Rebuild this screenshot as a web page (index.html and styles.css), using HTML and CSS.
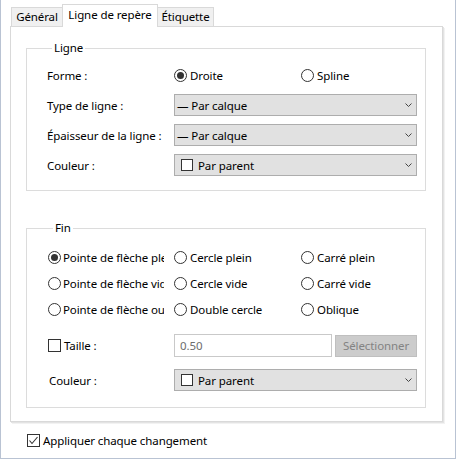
FILE: index.html
```html
<!DOCTYPE html>
<html lang="fr">
<head>
<meta charset="utf-8">
<title>Ligne de repère</title>
<link rel="stylesheet" href="styles.css">
</head>
<body>
<div class="window">
  <div class="tabs">
    <div class="tab tab-general">Général</div>
    <div class="tab tab-active">Ligne de repère</div>
    <div class="tab tab-label">Étiquette</div>
  </div>
  <div class="panel">
    <fieldset class="group group-ligne">
      <legend>Ligne</legend>
      <div class="form-grid">
        <span class="lbl">Forme :</span>
        <div class="radio-pair">
          <label class="radio radio-wide checked"><span class="circle"></span>Droite</label>
          <label class="radio"><span class="circle"></span>Spline</label>
        </div>
        <span class="lbl">Type de ligne :</span>
        <div class="select"><span class="val">— Par calque</span><svg class="chev" width="7" height="4" viewBox="0 0 7 4"><polyline points="0.5,0.5 3.5,3.5 6.5,0.5" fill="none" stroke="#444" stroke-width="1"/></svg></div>
        <span class="lbl">Épaisseur de la ligne :</span>
        <div class="select"><span class="val">— Par calque</span><svg class="chev" width="7" height="4" viewBox="0 0 7 4"><polyline points="0.5,0.5 3.5,3.5 6.5,0.5" fill="none" stroke="#444" stroke-width="1"/></svg></div>
        <span class="lbl">Couleur :</span>
        <div class="select"><span class="swatch"></span><span class="val">Par parent</span><svg class="chev" width="7" height="4" viewBox="0 0 7 4"><polyline points="0.5,0.5 3.5,3.5 6.5,0.5" fill="none" stroke="#444" stroke-width="1"/></svg></div>
      </div>
    </fieldset>

    <fieldset class="group group-fin">
      <legend>Fin</legend>
      <div class="radio-grid">
        <label class="radio clip checked"><span class="circle"></span><span class="clip-text">Pointe de flèche pleine</span></label>
        <label class="radio"><span class="circle"></span>Cercle plein</label>
        <label class="radio"><span class="circle"></span>Carré plein</label>
        <label class="radio clip"><span class="circle"></span><span class="clip-text">Pointe de flèche vide</span></label>
        <label class="radio"><span class="circle"></span>Cercle vide</label>
        <label class="radio"><span class="circle"></span>Carré vide</label>
        <label class="radio clip"><span class="circle"></span><span class="clip-text">Pointe de flèche ouverte</span></label>
        <label class="radio"><span class="circle"></span>Double cercle</label>
        <label class="radio"><span class="circle"></span>Oblique</label>
      </div>
      <div class="size-row">
        <label class="check-label size-label"><span class="check"></span>Taille :</label>
        <div class="field">0.50</div>
        <div class="btn">Sélectionner</div>
      </div>
      <div class="color-row">
        <span class="lbl lbl-fin">Couleur :</span>
        <div class="select"><span class="swatch"></span><span class="val">Par parent</span><svg class="chev" width="7" height="4" viewBox="0 0 7 4"><polyline points="0.5,0.5 3.5,3.5 6.5,0.5" fill="none" stroke="#444" stroke-width="1"/></svg></div>
      </div>
    </fieldset>
  </div>
  <label class="check-label apply"><span class="check checked"><svg width="11" height="11" viewBox="0 0 11 11"><polyline points="1.5,5.5 4,8.5 9.5,2" fill="none" stroke="#333" stroke-width="1.1"/></svg></span>Appliquer chaque changement</label>
</div>
</body>
</html>
```

FILE: styles.css
```css
* { box-sizing: border-box; }
html, body { margin: 0; background: #ffffff; }
body {
  font-family: "Noto Sans", "Segoe UI", sans-serif;
  font-size: 11.5px;
  letter-spacing: -0.1px;
  color: #000;
}
.window {
  width: 456px;
  height: 459px;
  border: 1px solid #b9c3d3;
  border-top: none;
  padding: 4px 12px 0 9px;
  display: flex;
  flex-direction: column;
  background: #fff;
}

/* Tabs */
.tabs {
  display: flex;
  align-items: flex-end;
  height: 23px;
  margin: 0 0 -1px 1px;
  position: relative;
  z-index: 1;
}
.tab {
  height: 20px;
  border: 1px solid #d9d9d9;
  background: #f0f0f0;
  display: flex;
  align-items: center;
  justify-content: center;
  white-space: nowrap;
  padding-bottom: 1px;
}
.tab-general { width: 51px; border-right: none; }
.tab-label { width: 56px; border-left: none; }
.tab-active {
  width: 96px;
  height: 23px;
  background: #fff;
  border-bottom: none;
  padding-bottom: 3px;
}

/* Panel */
.panel {
  border: 1px solid #d9d9d9;
  box-shadow: 1px 1px 0 #e3e3e3, 2px 2px 0 #f2f2f2;
  padding: 13px 16px 13px 15px;
}
.group {
  margin: 0;
  border: 1px solid #dcdcdc;
  min-width: 0;
}
.group legend {
  padding: 0 2px;
  margin-left: 5px;
  line-height: 16px;
  height: 16px;
}
.group-ligne { padding: 8px 8px 14px 20px; }
.group-fin { margin-top: 29px; padding: 8px 8px 16px 21px; }

.form-grid {
  display: grid;
  grid-template-columns: 127px 1fr;
  grid-auto-rows: 22px;
  row-gap: 8px;
  align-items: center;
}
.lbl { white-space: nowrap; }

.radio {
  display: flex;
  align-items: center;
  gap: 3px;
  white-space: nowrap;
}
.radio-pair { display: flex; align-items: center; }
.radio-wide { width: 127px; }
.circle {
  flex: none;
  width: 13px;
  height: 13px;
  border: 1px solid #333;
  border-radius: 50%;
  background: #fff;
  display: flex;
  align-items: center;
  justify-content: center;
}
.checked .circle::after {
  content: "";
  width: 7px;
  height: 7px;
  border-radius: 50%;
  background: #333;
}
.clip { width: 116px; gap: 2px; }
.clip-text { overflow: hidden; flex: 1; min-width: 0; }

.select {
  height: 22px;
  width: 100%;
  background: #e1e1e1;
  border: 1px solid #adadad;
  display: flex;
  align-items: center;
  padding: 0 0 0 2px;
}
.select .val { flex: 1; white-space: nowrap; }
.chev { flex: none; margin-right: 4px; }
.swatch {
  flex: none;
  width: 12px;
  height: 12px;
  border: 1px solid #333;
  background: #fff;
  margin: 0 5px 0 4px;
}

.radio-grid {
  display: grid;
  grid-template-columns: 126px 127px 1fr;
  grid-auto-rows: 26px;
  align-items: center;
}
.size-row {
  display: flex;
  align-items: center;
  height: 23px;
  margin-top: 12px;
}
.check-label { display: flex; align-items: center; gap: 3px; white-space: nowrap; }
.size-label { width: 126px; }
.check {
  flex: none;
  width: 13px;
  height: 13px;
  border: 1px solid #333;
  background: #fff;
  display: flex;
  align-items: center;
  justify-content: center;
}
.field {
  width: 158px;
  height: 23px;
  border: 1px solid #c9c9c9;
  color: #6d6d6d;
  display: flex;
  align-items: center;
  padding-left: 5px;
}
.btn {
  width: 82px;
  height: 22px;
  margin-left: 3px;
  background: #cccccc;
  border: 1px solid #bfbfbf;
  color: #838383;
  display: flex;
  align-items: center;
  justify-content: center;
}
.color-row {
  display: grid;
  grid-template-columns: 126px 1fr;
  align-items: center;
  margin-top: 12px;
}
.lbl-fin { padding-left: 1px; }

.apply {
  height: 22px;
  margin: 7px 0 0 17px;
}
```
